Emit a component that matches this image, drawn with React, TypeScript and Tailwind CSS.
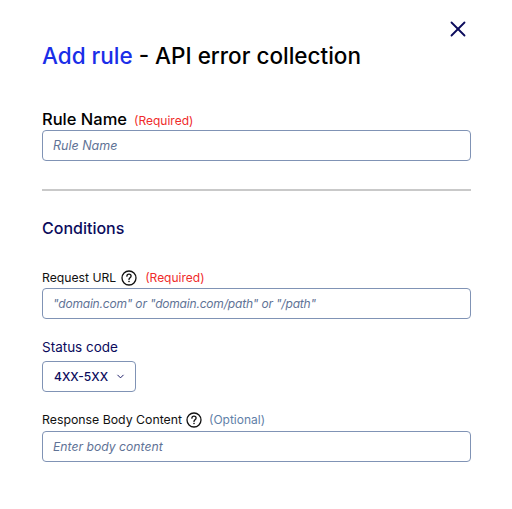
import { ChevronDown, X } from "lucide-react";

function HelpIcon() {
    return (
        <svg width="16" height="16" viewBox="0 0 16 16" fill="none" className="shrink-0">
            <circle cx="8" cy="8" r="7" stroke="#111" strokeWidth="1.3" />
            <path d="M5.9 6.2c0-1.2 1-2 2.1-2s2.1.8 2.1 1.9c0 1.7-2.1 1.7-2.1 3.4" stroke="#111" strokeWidth="1.3" strokeLinecap="round" />
            <circle cx="8" cy="11.5" r=".8" fill="#111" />
        </svg>
    );
}

function TextBox(props: { placeholder: string; className: string }) {
    return (
        <input
            readOnly
            placeholder={props.placeholder}
            className={`w-full h-[31px] rounded border border-[#8093b5] px-[10px] italic text-[#5f7396] placeholder:text-[#5f7396] focus:outline-none ${props.className}`}
        />
    );
}

export default function App() {
    return (
        <div className="w-[512px] h-[509px] bg-white font-['Inter',sans-serif] overflow-hidden">
            <div className="flex justify-end pt-[16px] pr-[41.5px]">
                <X size={26} strokeWidth={1.7} className="text-[#0b0b5c]" />
            </div>
            <div className="flex flex-col pl-[42px] pr-[41px]">
                <h1 className="text-[22.5px] leading-[30px] -mt-[1px] font-medium text-black">
                    <span className="text-[#1a2ee8]">Add rule</span> - API error collection
                </h1>
                <div className="flex items-baseline gap-[7px] mt-[38px] h-[21px]">
                    <span className="text-[16.5px] leading-[21px] font-medium text-black">Rule Name</span>
                    <span className="text-[12px] text-[#ef2b2b]">(Required)</span>
                </div>
                <TextBox placeholder="Rule Name" className="text-[12.5px]" />
                <div className="h-[2px] bg-[#c9c9c9] mt-[28px]" />
                <h2 className="text-[16px] leading-[22px] mt-[26px] font-medium text-[#0b0b5c]">Conditions</h2>
                <div className="flex items-center mt-[29px] h-[20px]">
                    <span className="text-[12.2px] text-[#111]">Request URL</span>
                    <span className="ml-[5px]"><HelpIcon /></span>
                    <span className="ml-[8px] text-[12px] text-[#ef2b2b]">(Required)</span>
                </div>
                <TextBox placeholder={'"domain.com" or "domain.com/path" or "/path"'} className="text-[12px] tracking-[-0.19px]" />
                <span className="text-[13.5px] leading-[20px] mt-[18px] text-[#0b0b5c]">Status code</span>
                <div className="mt-[4px] flex items-center w-[94px] h-[31px] rounded border border-[#8093b5] pl-[11px] text-[12px] font-medium text-[#0b0b5c]">
                    4XX-5XX
                    <ChevronDown size={11} strokeWidth={2} className="ml-[7px]" />
                </div>
                <div className="flex items-center mt-[18px] mb-[1px] h-[20px]">
                    <span className="text-[12.3px] text-[#111]">Response Body Content</span>
                    <span className="ml-[4px]"><HelpIcon /></span>
                    <span className="ml-[7px] text-[12px] text-[#5f7fa8]">(Optional)</span>
                </div>
                <TextBox placeholder="Enter body content" className="text-[12.2px]" />
            </div>
        </div>
    );
}
